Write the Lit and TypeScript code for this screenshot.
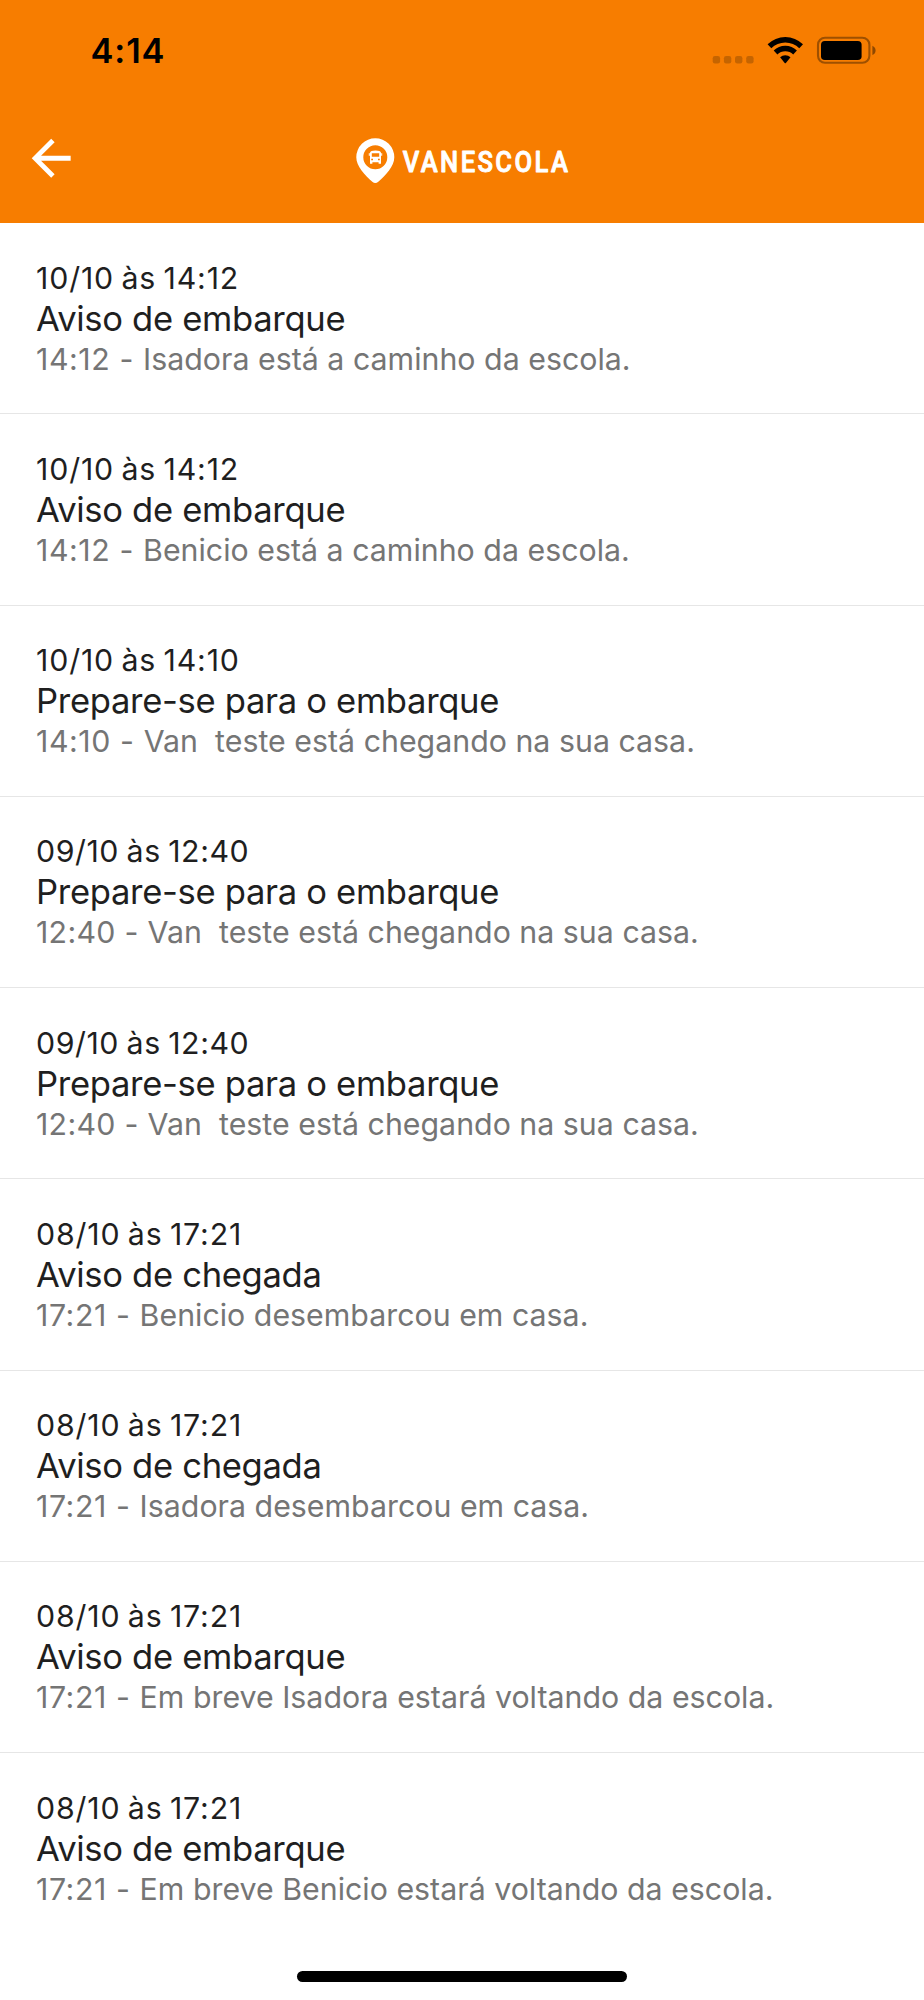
import { LitElement, html, css } from "lit";
import { customElement, property } from "lit/decorators.js";
import { classMap } from "lit/directives/class-map.js";

interface Notice {
  date: string;
  title: string;
  time: string;
  text: string;
}

const NOTICES: Notice[] = [
  { date: "10/10 às 14:12", title: "Aviso de embarque", time: "14:12", text: "Isadora está a caminho da escola." },
  { date: "10/10 às 14:12", title: "Aviso de embarque", time: "14:12", text: "Benicio está a caminho da escola." },
  { date: "10/10 às 14:10", title: "Prepare-se para o embarque", time: "14:10", text: "Van  teste está chegando na sua casa." },
  { date: "09/10 às 12:40", title: "Prepare-se para o embarque", time: "12:40", text: "Van  teste está chegando na sua casa." },
  { date: "09/10 às 12:40", title: "Prepare-se para o embarque", time: "12:40", text: "Van  teste está chegando na sua casa." },
  { date: "08/10 às 17:21", title: "Aviso de chegada", time: "17:21", text: "Benicio desembarcou em casa." },
  { date: "08/10 às 17:21", title: "Aviso de chegada", time: "17:21", text: "Isadora desembarcou em casa." },
  { date: "08/10 às 17:21", title: "Aviso de embarque", time: "17:21", text: "Em breve Isadora estará voltando da escola." },
  { date: "08/10 às 17:21", title: "Aviso de embarque", time: "17:21", text: "Em breve Benicio estará voltando da escola." },
];

@customElement("status-bar")
export class StatusBar extends LitElement {
  static styles = css`
    :host {
      display: flex;
      justify-content: space-between;
      height: 100px;
      box-sizing: border-box;
      padding: 30px 48px 0 90.5px;
      color: #000;
    }
    .time {
      font-size: 34.4px;
      font-weight: 600;
      line-height: 41px;
      letter-spacing: 0.9px;
    }
    .icons {
      display: block;
      width: 166px;
      height: 36px;
    }
  `;

  render() {
    return html`
      <span class="time">4:14</span>
      <svg class="icons" viewBox="0 0 166 36">
        <g fill-opacity="0.2">
          <rect x="2.7" y="26" width="7.4" height="7.4" rx="2.2" />
          <rect x="13.9" y="26" width="7.4" height="7.4" rx="2.2" />
          <rect x="25" y="26" width="7.4" height="7.4" rx="2.2" />
          <rect x="36.2" y="26" width="7.4" height="7.4" rx="2.2" />
        </g>
        <path d="M57.6 14.3 A25.2 25.2 0 0 1 93 14.3 L89.3 18.2 A19.8 19.8 0 0 0 61.3 18.2 Z" />
        <path d="M63.7 20.6 A16.4 16.4 0 0 1 86.9 20.6 L83.2 24.4 A11.2 11.2 0 0 0 67.4 24.4 Z" />
        <path d="M70.1 27.2 A7.6 7.6 0 0 1 80.5 27.2 L75.9 33 Q75.3 33.7 74.7 33 Z" />
        <rect x="108" y="7.8" width="51.4" height="25" rx="7" fill="none" stroke="#000" stroke-opacity="0.36" stroke-width="2.1" />
        <rect x="111" y="11" width="40.6" height="19" rx="3.8" />
        <path d="M162.4 15.8 Q165.6 17.4 165.6 20.4 T162.4 25 Z" fill-opacity="0.42" />
      </svg>
    `;
  }
}

@customElement("app-header")
export class AppHeader extends LitElement {
  static styles = css`
    :host {
      display: grid;
      grid-template-columns: 1fr auto 1fr;
      align-items: start;
      height: 123px;
    }
    .back {
      width: 58.4px;
      height: 58.4px;
      margin: 29.3px 0 0 22.4px;
      padding: 0;
      border: 0;
      background: none;
    }
    .back svg {
      display: block;
      width: 100%;
      height: 100%;
    }
    .logo {
      display: block;
      width: 216px;
      height: 48px;
      margin-top: 37px;
      overflow: visible;
    }
    .word {
      font: 500 29.4px Roboto, sans-serif;
      letter-spacing: 2.75px;
    }
  `;

  render() {
    return html`
      <button class="back" aria-label="Voltar">
        <svg viewBox="0 0 24 24" fill="#fff">
          <path d="M20 11H7.83l5.59-5.59L12 4l-8 8 8 8 1.41-1.41L7.83 13H20v-2z" />
        </svg>
      </button>
      <svg class="logo" viewBox="354 137 216 48" fill="#fff">
        <path
          fill-rule="evenodd"
          d="M375.3 138.2 A19 19 0 0 0 356.3 157.2 C356.3 166.5 365 175 372.3 181.8 Q375.3 184.4 378.3 181.8 C385.6 175 394.3 166.5 394.3 157.2 A19 19 0 0 0 375.3 138.2 Z M375.3 145.2 a12 12 0 1 1 0 24 a12 12 0 1 1 0 -24 Z"
        />
        <path
          fill-rule="evenodd"
          d="M370 152.8 Q370.4 150.6 375.5 150.6 T381 152.8 V163.8 H378.6 V162.2 H372.4 V163.8 H370 Z M371.8 153.2 V156.8 H379.2 V153.2 Z M371.2 158.8 V160.2 H373 V158.8 Z M378 158.8 V160.2 H379.8 V158.8 Z"
        />
        <rect x="368.8" y="153.2" width="1" height="2.6" />
        <rect x="381.2" y="153.2" width="1" height="2.6" />
        <g transform="translate(402.8 171.5) scale(0.87 1)">
          <text class="word" stroke="#fff" stroke-width="0.9" stroke-linejoin="round">VANESCOLA</text>
        </g>
      </svg>
    `;
  }
}

@customElement("notice-row")
export class NoticeRow extends LitElement {
  @property({ attribute: false }) notice!: Notice;

  static styles = css`
    :host {
      display: flex;
      flex-direction: column;
      box-sizing: border-box;
      height: 191.25px;
      padding: 34.6px 36px 0;
      border-bottom: 1px solid #e6e6e6;
      white-space: pre;
    }
    :host(:last-of-type) {
      border-bottom: 0;
    }
    .date,
    .text {
      font-size: 30.3px;
      line-height: 40px;
    }
    .date {
      color: #1f1f1f;
      letter-spacing: 0.85px;
      word-spacing: -2px;
    }
    .date.tight {
      letter-spacing: 0.55px;
      word-spacing: -1.5px;
    }
    .title {
      color: #1f1f1f;
      font-size: 34.6px;
      line-height: 41px;
      letter-spacing: -0.32px;
    }
    .text {
      color: #757575;
      letter-spacing: 0.02px;
    }
    .time {
      letter-spacing: 0.58px;
    }
    .time.tight {
      letter-spacing: 0.3px;
    }
  `;

  render() {
    const { date, title, time, text } = this.notice;
    const tight = time === "12:40";
    return html`<div class=${classMap({ date: true, tight })}>${date}</div><div class="title">${title}</div><div class="text"><span class=${classMap({ time: true, tight })}>${time} - </span>${text}</div>`;
  }
}

@customElement("app-root")
export class AppRoot extends LitElement {
  static styles = css`
    :host {
      display: flex;
      flex-direction: column;
      height: 2000px;
      background: #fff;
      font-family: Inter, "Liberation Sans", sans-serif;
      overflow: hidden;
    }
    .top {
      flex: none;
      background: #f77d00;
    }
    .list {
      flex: 1;
    }
    .home {
      flex: none;
      align-self: center;
      width: 330px;
      height: 11px;
      margin-bottom: 18px;
      border-radius: 6px;
      background: #000;
    }
  `;

  render() {
    return html`
      <div class="top">
        <status-bar></status-bar>
        <app-header></app-header>
      </div>
      <div class="list">${NOTICES.map((n) => html`<notice-row .notice=${n}></notice-row>`)}</div>
      <div class="home"></div>
    `;
  }
}
